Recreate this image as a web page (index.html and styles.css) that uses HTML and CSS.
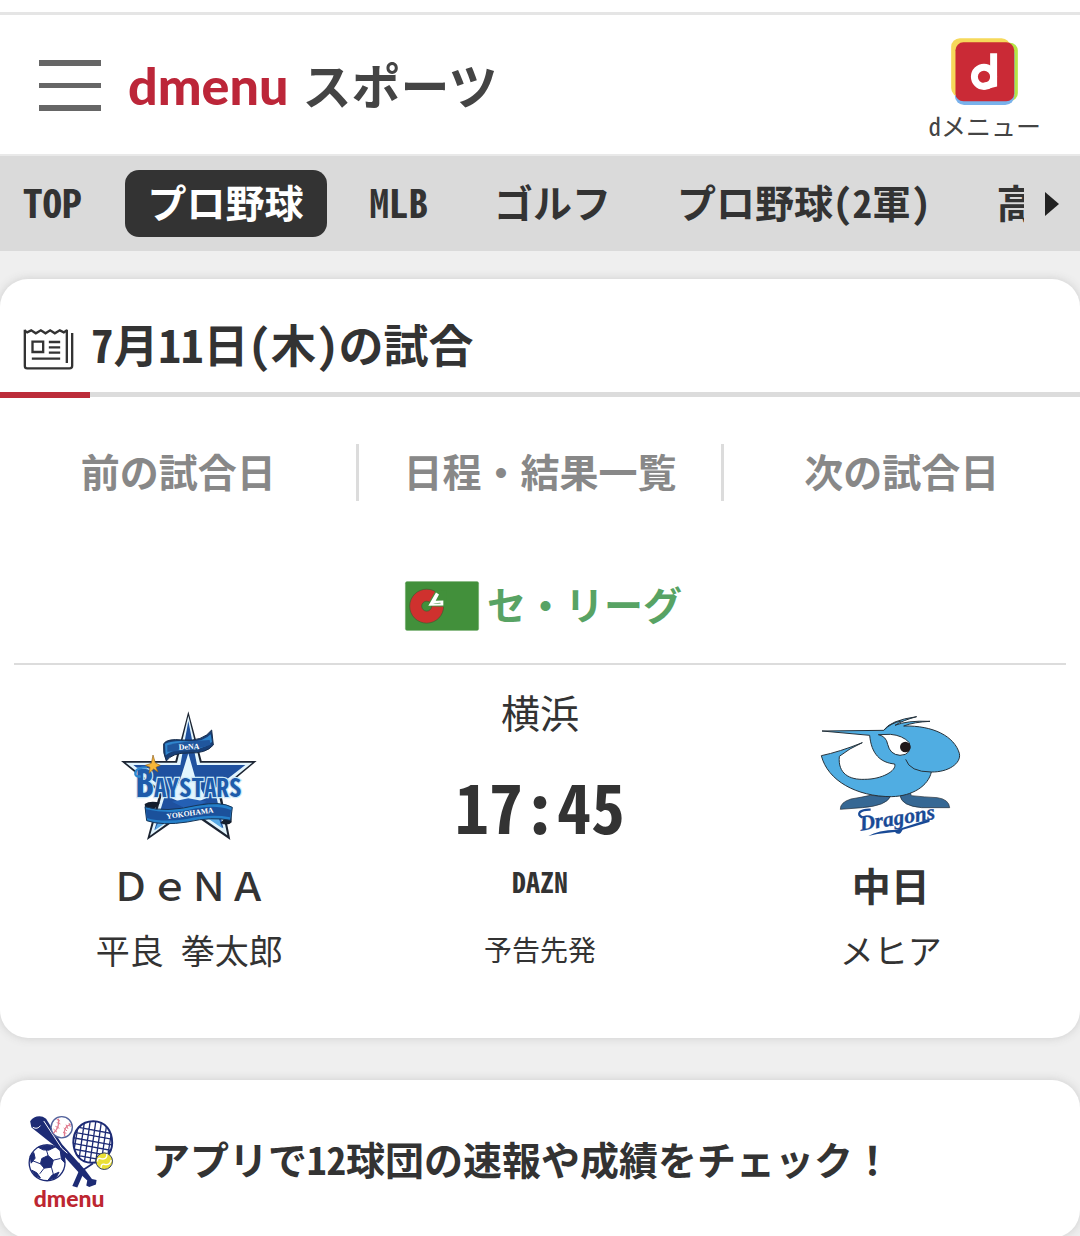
FILE: index.html
```html
<!DOCTYPE html>
<html lang="ja">
<head>
<meta charset="utf-8">
<meta name="viewport" content="width=device-width, initial-scale=1">
<title>dmenu スポーツ</title>
<link rel="stylesheet" href="styles.css">
</head>
<body>
<header class="header">
  <button class="menu-button" type="button" aria-label="メニュー"><span class="bar"></span><span class="bar bar-mid"></span><span class="bar"></span></button>
  <a class="logo" href="#"><span class="logo-brand">dmenu</span><span class="logo-name">スポーツ</span></a>
  <a class="portal" href="#">
    <svg class="portal-icon" viewBox="153 113 201 202" aria-hidden="true">
      <rect x="175" y="127" width="179" height="176" rx="24" fill="#b6e545"/>
      <rect x="164" y="134" width="180" height="181" rx="28" fill="#79b2ec"/>
      <rect x="153" y="114" width="178" height="176" rx="26" fill="#f6d95b"/>
      <rect x="166" y="126" width="177" height="178" rx="24" fill="#ca2a36"/>
      <path d="M281 159V251L252 258" fill="none" stroke="#fff" stroke-width="21"/>
      <circle cx="252" cy="230" r="29" fill="none" stroke="#fff" stroke-width="21"/>
    </svg>
    <span class="portal-label">dメニュー</span>
  </a>
</header>

<nav class="nav">
  <div class="nav-list">
    <a class="nav-item" href="#">TOP</a>
    <a class="nav-item nav-current" href="#">プロ野球</a>
    <a class="nav-item" href="#">MLB</a>
    <a class="nav-item" href="#">ゴルフ</a>
    <a class="nav-item" href="#">プロ野球(2軍)</a>
    <a class="nav-item" href="#">高校野球</a>
  </div>
  <button class="nav-next" type="button" aria-label="次へ"><svg class="nav-arrow" viewBox="0 0 14 24" aria-hidden="true"><path d="M0 0L14 12L0 24Z" fill="#222"/></svg></button>
</nav>

<main class="main">
  <section class="card games">
    <h1 class="card-title">
      <svg class="news-icon" viewBox="68 178 152 123" aria-hidden="true" fill="none" stroke="#333" stroke-width="7">
        <path d="M73 180V289Q73 296 80 296H207Q215 296 215 288V190M199 180V280"/>
        <path d="M72 182L80 188L92 182L106 191L121 182L135 191L149 182L163 191L178 182L190 188L200 182"/>
        <path d="M96 216H128V247H96ZM145 217H179M145 233H179M145 249H179M94 267H179"/>
      </svg>
      <span>7月11日(木)の試合</span>
    </h1>
    <nav class="tabs">
      <a class="tab" href="#">前の試合日</a>
      <a class="tab tab-mid" href="#">日程・結果一覧</a>
      <a class="tab" href="#">次の試合日</a>
    </nav>
    <h2 class="league">
      <svg class="league-flag" viewBox="0 0 222 149" aria-hidden="true">
        <rect x="1" y="1" width="220" height="147" rx="5" fill="#42903b" stroke="#6cab67"/>
        <circle cx="65" cy="75" r="51" fill="#cf312e" stroke="#405c30" stroke-width="2"/>
        <path d="M65 75L92 29L125 27L123 77Z" fill="#42903b"/>
        <circle cx="65" cy="75" r="15" fill="#42903b" stroke="#405c30" stroke-width="2"/>
        <path fill-rule="evenodd" d="M70 74L93 34L102 40L92 59L115 58V73ZM84 68L107 67L106 65L90 66Z" fill="#fff"/>
      </svg>
      <span class="league-name">セ・リーグ</span>
    </h2>
    <a class="match" href="#">
      <div class="team">
        <svg class="team-logo" viewBox="18 15 414 396" aria-hidden="true">
          <path d="M223 19L263 168H428L320 258L349 405L223 318L99 405L137 263L21 168H184Z" fill="#1c2432"/>
          <path d="M223 32L258 173H415L312 258L340 391L223 309L108 392L146 261L35 173H189Z" fill="#e1f4fd"/>
          <path d="M223 48L249 180H394L302 251L328 370L223 297L121 375L157 257L58 180H199Z" fill="#1f519f"/>
          <path d="M223 145L245 222L276 280L223 302L173 280L200 219Z" fill="#e3f5fe"/>
          <path d="M140 337L122 376L175 340ZM314 340L325 370L281 340Z" fill="#58a9e4"/>
          <path d="M174 290L223 280L278 290L223 314Z" fill="#2460b4"/>
          <path d="M149 116Q160 100 205 105Q266 111 293 75L298 120Q277 146 224 144Q174 143 157 168Q146 145 149 116Z" fill="#183f78" stroke="#162c4b" stroke-width="3"/>
          <path d="M153 116Q180 105 219 109Q268 112 290 88L294 111Q263 138 205 135Q173 135 155 151Z" fill="#2f85cd"/>
          <path d="M160 121Q209 108 287 105L290 119Q244 137 160 140Z" fill="#20569d"/>
          <text x="194" y="134" class="ribbon-top" transform="rotate(-2 194 134)">DeNA</text>
          <path d="M92 297Q107 286 138 293L123 310L96 326ZM352 320L353 352Q342 364 319 354Z" fill="#141e2d"/>
          <path d="M93 305Q153 324 249 301Q322 288 355 307L350 346Q295 334 220 351Q144 363 98 347Z" fill="#2580ca" stroke="#153457" stroke-width="3"/>
          <path d="M96 313Q174 330 245 310Q305 298 351 315L348 337Q290 326 219 342Q146 353 98 339Z" fill="#1b519b"/>
          <text x="158" y="342" class="ribbon-bottom" transform="rotate(-8 158 342)">YOKOHAMA</text>
          <text x="64" y="276" class="bay bay-big">B</text>
          <text x="120" y="276" class="bay bay-small">AYSTARS</text>
          <path d="M99 187Q68 187 64 202Q62 217 80 214" fill="none" stroke="#2e86cd" stroke-width="7"/>
          <path d="M117 150L124 174L139 181L126 187L132 201L119 192L105 205L108 187L94 181L112 175Z" fill="#f6b638" stroke="#91601d" stroke-width="2"/>
        </svg>
        <strong class="team-name team-name-wide">ＤｅＮＡ</strong>
        <span class="pitcher">平良 拳太郎</span>
      </div>
      <div class="info">
        <span class="place">横浜</span>
        <time class="start">17:45</time>
        <strong class="broadcast">DAZN</strong>
        <span class="note">予告先発</span>
      </div>
      <div class="team">
        <svg class="team-logo team-logo-wide" viewBox="120 60 423 396" aria-hidden="true">
          <g fill="#366894" stroke="#202b35" stroke-width="2">
            <path d="M271 316Q249 321 213 327Q180 337 181 358L247 353Q319 347 331 320Z"/>
            <path d="M360 317L391 308L394 317Q433 321 472 323Q507 328 509 353H425Q365 348 360 317Z"/>
          </g>
          <path d="M126 123L311 121Q330 91 410 80Q368 91 345 106Q381 91 450 94Q402 96 371 108C460 106 523 139 538 190C545 221 503 247 454 246C445 287 399 318 335 320C229 320 143 272 124 197Q177 186 247 158Q208 175 178 199C173 251 208 270 254 268C306 268 351 242 344 222C301 218 274 192 269 136Z" fill="#50ade2" stroke="#26323b" stroke-width="3"/>
          <path d="M295 134L331 133Q368 136 388 158Q397 195 360 196Q330 194 323 163Q319 139 295 134Z" fill="#fff" stroke="#26323b" stroke-width="3"/>
          <circle cx="376" cy="171" r="16" fill="#21191a"/>
          <path d="M377 208Q389 246 454 246M311 121Q334 98 364 93" fill="none" stroke="#26323b" stroke-width="3"/>
          <text x="242" y="422" class="dragons-text" transform="rotate(-9 242 422)">Dragons</text>
          <path d="M247 382Q232 375 240 366Q250 358 272 359" fill="none" stroke="#194a96" stroke-width="7"/>
          <path d="M265 438Q294 420 350 419L450 386L448 396L368 419Q358 440 345 426L292 432Z" fill="#194a96"/>
        </svg>
        <strong class="team-name">中日</strong>
        <span class="pitcher">メヒア</span>
      </div>
    </a>
  </section>

  <a class="card app" href="#">
    <svg class="app-icon" viewBox="84 132 258 280" aria-hidden="true">
      <path d="M228 344L247 299L235 276M247 299L279 278" fill="none" stroke="#1d2b75" stroke-width="5"/>
      <path d="M217 346L236 302L250 309L232 350Z" fill="#1d2b75"/>
      <clipPath id="racket"><path d="M218 215C218 177 244 149 280 149C317 149 338 180 338 216C338 253 307 277 275 277C241 277 221 253 218 215Z"/></clipPath>
      <g fill="none" stroke="#1d2b75">
        <path clip-path="url(#racket)" stroke-width="4" d="M207 164L342 189M207 181L342 206M207 198L342 223M207 215L342 240M207 232L342 257M207 249L342 274M238 142L218 263M255 142L235 280M272 142L252 283M289 142L269 283M306 142L286 283M323 142L303 283M340 155L320 275"/>
        <path stroke-width="6" d="M220 215C220 177 244 151 280 151C317 151 337 180 337 216C337 251 307 276 275 276C241 276 222 251 220 215Z"/>
      </g>
      <path d="M93 166L90 151Q103 132 128 137L138 143L186 220L257 299L276 325L290 328L288 341L268 349L259 344L262 329L237 306L164 225L94 170Z" fill="#1d2b75"/>
      <path d="M98 169Q112 177 121 164M131 150L185 232L202 247" fill="none" stroke="#fff" stroke-width="3"/>
      <circle cx="185" cy="169" r="32" fill="#fff" stroke="#52629b" stroke-width="4"/>
      <path d="M175 143Q180 169 160 187M212 160Q188 167 194 196" fill="none" stroke="#e17c90" stroke-width="4"/>
      <path d="M170 145L180 150M170 155L181 159M166 166L178 172M160 174L171 184M207 156L211 168M198 161L204 174M191 171L201 180M189 184L199 187" stroke="#e17c90" stroke-width="3"/>
      <circle cx="141" cy="276" r="54" fill="#fff" stroke="#1d2b75" stroke-width="4"/>
      <g fill="#1d2b75" stroke="#1d2b75" stroke-width="3">
        <path d="M125 263L144 254L160 268L154 289L132 292L121 279Z"/>
        <path d="M114 229L141 222L164 229L146 238L129 237ZM90 255L101 245L105 262L93 277ZM181 242L193 255L194 276L184 265ZM95 298L110 306L121 321L106 316ZM144 328L156 313L177 304L168 321Z"/>
        <path d="M139 237L144 254M160 268L181 263M154 289L160 311M132 292L119 309M121 279L98 270" fill="none"/>
      </g>
      <circle cx="313" cy="271" r="25" fill="#eadf36" stroke="#313e62" stroke-width="3"/>
      <path d="M293 272Q292 258 305 264Q322 267 321 249M304 291Q302 277 316 281Q331 283 334 267" fill="none" stroke="#fff" stroke-width="4"/>
      <text x="101" y="409" class="app-brand">dmenu</text>
    </svg>
    <span class="app-text">アプリで12球団の速報や成績をチェック<span class="full-width">！</span></span>
  </a>
</main>
</body>
</html>
```
FILE: styles.css
```css
* { box-sizing: border-box; }

body {
  margin: 0;
  background: #efefef;
  color: #333;
  font-family: "Noto Sans CJK JP", sans-serif;
  font-feature-settings: "hwid";
}

a { color: inherit; text-decoration: none; }

button {
  border: 0;
  padding: 0;
  background: none;
}

svg { display: block; flex: none; overflow: visible; }

.full-width { font-feature-settings: normal; }

.header {
  display: flex;
  align-items: flex-start;
  margin-top: 12px;
  padding: 23px 39px 11px;
  border-top: 3px solid #e5e5e5;
  border-bottom: 2px solid #e9e9e9;
  background: #fff;
  box-shadow: 0 -12px #fff;
}

.menu-button {
  display: flex;
  flex-direction: column;
  justify-content: space-between;
  width: 62px;
  height: 51px;
  margin-top: 22px;
}

.bar { width: 100%; height: 6px; background: #666; }
.bar-mid { height: 5px; }

.logo {
  display: flex;
  align-items: baseline;
  gap: 14px;
  margin: 10px auto 0 27px;
  line-height: 72px;
}

.logo-brand {
  color: #bc2639;
  font: 900 52px/72px Lato, sans-serif;
}

.logo-name { color: #444; font-size: 49px; font-weight: 700; }

.portal {
  display: flex;
  flex-direction: column;
  align-items: center;
}

.portal-icon { width: 67px; height: 67px; }
.portal-label { margin-top: 3px; font-size: 25px; line-height: 35px; color: #444; }

.nav {
  display: flex;
  background: #dadada;
}

.nav-list {
  display: flex;
  flex: 1;
  gap: 20px;
  padding: 14px 0;
  overflow: hidden;
}

.nav-item {
  flex: none;
  padding: 0 23px 4px;
  border-radius: 14px;
  font-size: 39px;
  font-weight: 700;
  line-height: 63px;
}

.nav-current { background: #333; color: #fff; }

.nav-next {
  display: flex;
  align-items: center;
  justify-content: center;
  width: 56px;
}

.nav-arrow { width: 14px; height: 24px; }

.main {
  display: flex;
  flex-direction: column;
  gap: 42px;
  padding-top: 28px;
}

.card {
  border-radius: 28px;
  background: #fff;
  box-shadow: 0 0 10px #ccc;
}

.games { padding-bottom: 63px; }

.card-title {
  display: flex;
  align-items: center;
  gap: 17px;
  margin: 0;
  padding: 29px 23px 13px;
  border-bottom: 5px solid #dcdcdc;
  font-size: 45px;
  line-height: 71px;
  position: relative;
}

.card-title::after {
  content: "";
  position: absolute;
  left: 0;
  bottom: -6px;
  width: 90px;
  height: 6px;
  background: #bc2c3a;
}

.news-icon { width: 51px; height: 41px; margin-top: 12px; }

.tabs {
  display: grid;
  grid-template-columns: 33% 34% 33%;
  padding-top: 47px;
}

.tab {
  padding-bottom: 4px;
  color: #888;
  font-size: 39px;
  font-weight: 700;
  line-height: 53px;
  text-align: center;
}

.tab-mid { border: solid #dcdcdc; border-width: 0 3px; }

.league {
  display: flex;
  align-items: center;
  justify-content: center;
  gap: 8px;
  margin: 0 14px;
  padding: 72px 0 24px 7px;
  border-bottom: 2px solid #dcdcdc;
  color: #58a364;
  font-size: 39px;
  line-height: 60px;
}

.league-flag { width: 74px; height: 50px; }
.league-name { padding-bottom: 6px; }

.match {
  display: grid;
  grid-template-columns: 1fr 1fr 1fr;
  padding: 0 14px;
  text-align: center;
}

.team, .info {
  display: flex;
  flex-direction: column;
  align-items: center;
}

.team { padding-top: 45px; }
.team-logo { width: 138px; height: 132px; }
.team-logo-wide { width: 141px; }
.team-name { margin-top: 12px; font-size: 39px; line-height: 60px; }
.team-name-wide { font-weight: 500; font-feature-settings: normal; }
.pitcher { margin-top: 11px; font-size: 34px; line-height: 50px; }

.info { padding-top: 16px; }
.place { font-size: 39px; line-height: 60px; }
.start { margin-top: 14px; font-size: 68px; font-weight: 700; line-height: 100px; }
.broadcast { margin-top: 6px; font-size: 28px; line-height: 40px; }
.note { margin-top: 28px; font-size: 28px; line-height: 40px; }

.ribbon-top { font: 700 24px "Liberation Serif", serif; fill: #fff; }
.ribbon-bottom { font: 700 23px "Liberation Serif", serif; fill: #fff; }

.bay {
  fill: #1e5cab;
  stroke: #c8e7f8;
  stroke-width: 7px;
  paint-order: stroke;
  font-weight: 700;
}

.bay-big { font-size: 112px; }
.bay-small { font-size: 75px; }
.dragons-text { font: italic 700 64px "Liberation Serif", serif; fill: #194a96; stroke: #194a96; stroke-width: 1px; }
.app-brand { font: 900 69px Lato, sans-serif; fill: #bd2631; }

.app {
  display: flex;
  align-items: center;
  gap: 37px;
  padding: 35px 28px 30px;
}

.app-icon { width: 86px; height: 93px; }
.app-text { padding-bottom: 8px; font-size: 39px; font-weight: 700; line-height: 60px; }
```
